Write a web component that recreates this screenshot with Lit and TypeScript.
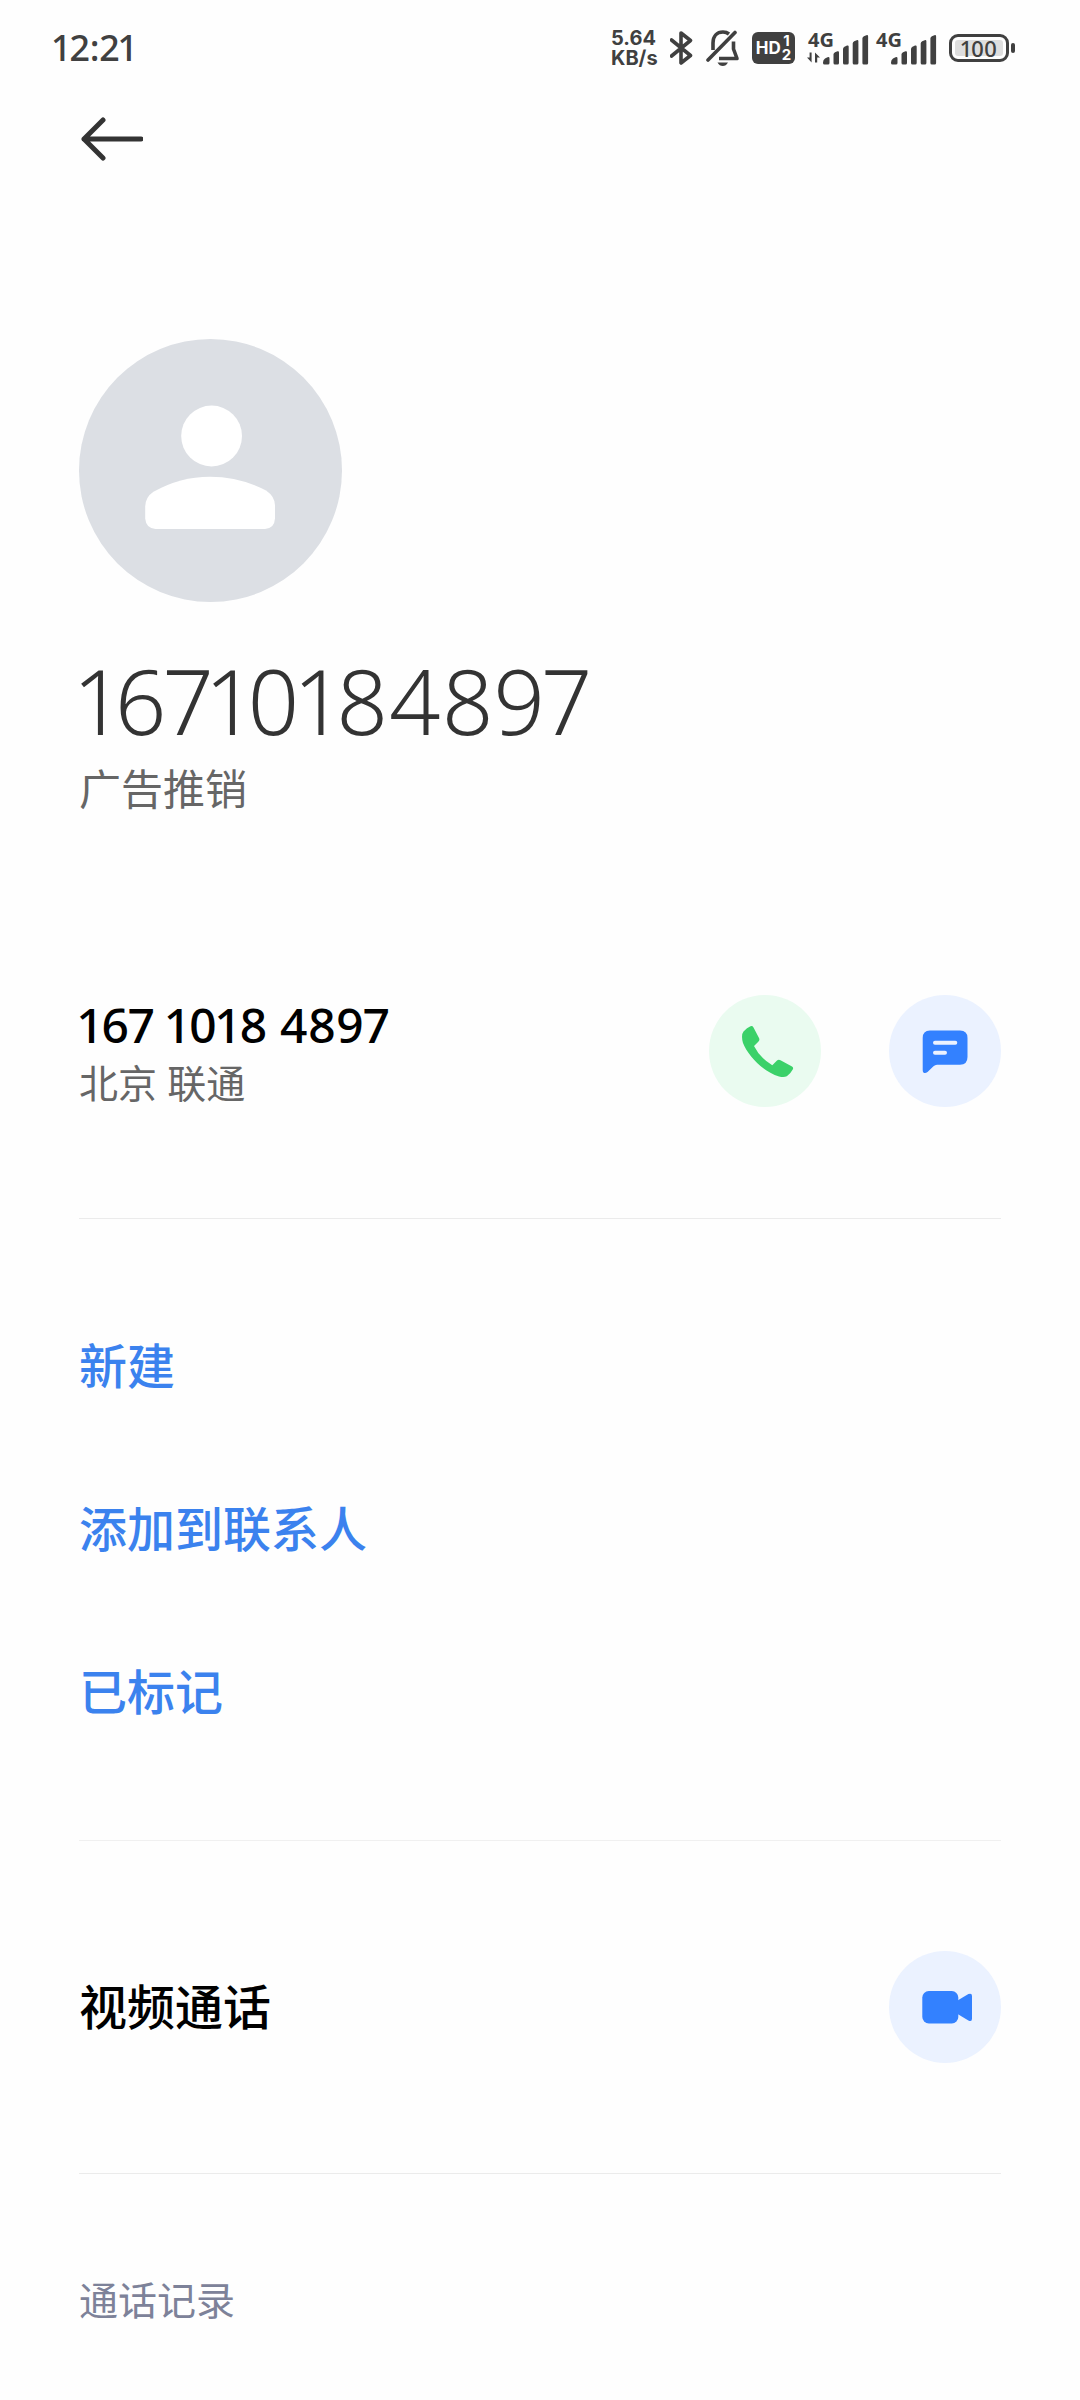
import { LitElement, html, css, svg } from 'lit';
import { customElement, property, state } from 'lit/decorators.js';

const backIcon = html`<svg width="64" height="48" viewBox="0 0 64 48" aria-hidden="true">
  <path d="M62 24H5M24 5L5 24L24 43" fill="none" stroke="#333" stroke-width="5" stroke-linecap="round" stroke-linejoin="round"/>
</svg>`;

const phoneIcon = svg`<path fill="#3bd169" d="M34.5 36.5Q38 32.5 41.5 31.2Q43.5 30.6 44.5 32.5L50 43Q51 45 49.5 46.5L45 51Q50.5 62.5 63.3 70.3L68 65.6Q69.6 64.3 71.5 65.3L83 71.5Q84.8 72.7 83.7 74.6Q81.5 79 77.8 81.2Q75 82.6 70 81.4C55 77.5 39 61 34 48Q31.8 40 34.5 36.5Z"/>`;

const messageIcon = svg`<path fill="#3381ff" d="M41 35.5H71Q78.5 35.5 78.5 43V62Q78.5 69.7 71 69.7H48Q46 69.7 44.5 71.2L38.5 77Q36 79 34.4 77.4Q33.7 76.7 33.7 75V43Q33.7 35.5 41 35.5Z"/>
  <path stroke="#ebf2ff" stroke-width="4" stroke-linecap="round" d="M46 47.7H66.3M46 57.8H56"/>`;

const videoIcon = svg`<rect x="33.3" y="40" width="36" height="32.4" rx="6.5" fill="#3381ff"/>
  <path fill="#3381ff" d="M69 49.2L79.4 43.1Q83 41.6 83 45V67.8Q83 71.2 79.4 69.5L69 63.2Z"/>`;

@customElement('round-action')
export class RoundAction extends LitElement {
  static styles = css`
    :host { display: block; flex: none; }
    .button {
      display: block;
      width: 112px;
      height: 112px;
      padding: 0;
      border: 0;
      border-radius: 50%;
      background: #ebf2ff;
      cursor: pointer;
    }
    .green { background: #eafbf0; }
    .icon { display: block; }
  `;

  @property() label = '';
  @property() tone = 'blue';
  @property({ attribute: false }) icon: unknown;

  render() {
    return html`<button class="button ${this.tone}" type="button" aria-label=${this.label}>
      <svg class="icon" width="112" height="112" viewBox="0 0 112 112" aria-hidden="true">${this.icon}</svg>
    </button>`;
  }
}

@customElement('signal-meter')
export class SignalMeter extends LitElement {
  static styles = css`
    :host { display: grid; width: 62px; height: 34px; }
    .network {
      grid-area: 1 / 1;
      padding-left: 1px;
      font: 700 20px/18px "Noto Sans", sans-serif;
      color: #404040;
    }
    .bars { grid-area: 1 / 1; }
  `;

  @property({ type: Boolean }) traffic = false;

  render() {
    return html`
      <span class="network">4G</span>
      <svg class="bars" width="62" height="34" viewBox="0 0 62 34" fill="#404040" aria-hidden="true">
        ${this.traffic
          ? svg`<path d="M4.6 21.5V31.5L0 26.5H2.6V21.5ZM8 31.500V21.500L13 26.500H10.200V31.500Z"/>`
          : ''}
        <path d="M16 31.5Q16 29 18 27.5L20.5 26.2Q22.5 25.5 22.5 27.5V32Q22.5 33.5 21 33.5H17.5Q16 33.5 16 32Z"/>
        <path d="M26.5 23.5Q26.5 22 28 21.3L30.5 20.3Q32 19.8 32 21.5V32Q32 33.5 30.5 33.5H28Q26.5 33.5 26.5 32Z"/>
        <path d="M36 18Q36 16.5 37.5 15.7L40 14.5Q41.7 14 41.7 15.7V32Q41.7 33.5 40.2 33.5H37.5Q36 33.5 36 32Z"/>
        <path d="M45.7 12.5Q45.7 11 47.2 10.3L49.7 9.2Q51.4 8.7 51.4 10.4V32Q51.4 33.5 49.9 33.5H47.2Q45.7 33.5 45.7 32Z"/>
        <path d="M55.4 7.5Q55.4 6 56.9 5.3L59.4 4.2Q61.1 3.7 61.1 5.4V32Q61.1 33.5 59.6 33.5H56.9Q55.4 33.5 55.4 32Z"/>
      </svg>
    `;
  }
}

@customElement('status-bar')
export class StatusBar extends LitElement {
  static styles = css`
    :host {
      display: flex;
      align-items: center;
      justify-content: space-between;
      height: 96px;
      padding: 0 65px 0 53px;
      color: #404040;
      font-family: "Noto Sans", "Noto Sans CJK SC", sans-serif;
    }
    .time {
      font-size: 36px;
      line-height: 48px;
      font-weight: 500;
      font-variant-numeric: proportional-nums;
    }
    .icons { display: flex; align-items: center; gap: 12px; }
    .speed {
      width: 47px;
      font-family: Inter, sans-serif;
      font-size: 20px;
      line-height: 20px;
      font-weight: 700;
      white-space: nowrap;
    }
    .line { display: block; }
    .hd {
      display: flex;
      align-items: center;
      justify-content: center;
      gap: 1px;
      width: 43px;
      height: 32px;
      border-radius: 6px;
      background: #404040;
      color: #fff;
      font-family: Inter, sans-serif;
      font-weight: 700;
      font-size: 17px;
      line-height: 32px;
    }
    .sims { display: grid; justify-items: center; font-size: 15px; line-height: 14px; }
    .signals { display: flex; gap: 6px; }
    .battery { display: flex; align-items: center; gap: 2px; }
    .cell {
      box-sizing: border-box;
      width: 60px;
      height: 28px;
      padding: 3px;
      border: 3px solid #404040;
      border-radius: 9px;
    }
    .level {
      display: block;
      border-radius: 3px;
      background: #dedede;
      text-align: center;
      font-size: 22px;
      line-height: 16px;
      font-weight: 500;
    }
    .tip { width: 4px; height: 10px; border-radius: 2px; background: #404040; }
  `;

  render() {
    return html`
      <span class="time">12:21</span>
      <div class="icons">
        <div class="speed"><span class="line">5.64</span><span class="line">KB/s</span></div>
        <svg width="24" height="36" viewBox="0 0 24 36" aria-hidden="true">
          <path d="M1.500 10L20.500 25.500L11 33V3L20.500 10.500L1.500 26" fill="none" stroke="#404040" stroke-width="3.6" stroke-linecap="round" stroke-linejoin="round"/>
        </svg>
        <svg width="34" height="38" viewBox="0 0 34 38" aria-hidden="true">
          <path d="M7 21V14C7 7 11 3 17 3Q20.5 3 23 5M27.5 12.5V20L31 29.5H13" fill="none" stroke="#404040" stroke-width="3.6" stroke-linejoin="round"/>
          <path d="M2 31L29 3.5" stroke="#404040" stroke-width="3.6" stroke-linecap="round"/>
          <path d="M11.5 33.5H22Q20 37 16.8 37Q13.5 37 11.5 33.5Z" fill="#404040"/>
        </svg>
        <div class="hd"><span>HD</span><span class="sims"><span>1</span><span>2</span></span></div>
        <div class="signals">
          <signal-meter traffic></signal-meter>
          <signal-meter></signal-meter>
        </div>
        <div class="battery">
          <div class="cell"><span class="level">100</span></div>
          <div class="tip"></div>
        </div>
      </div>
    `;
  }
}

@customElement('app-root')
export class AppRoot extends LitElement {
  static styles = css`
    :host {
      display: block;
      min-height: 100vh;
      background: #fefefe;
      color: #000;
      font-family: "Noto Sans", "Noto Sans CJK SC", sans-serif;
      font-variant-numeric: proportional-nums;
    }
    .toolbar { display: flex; align-items: center; height: 86px; padding: 0 79px; }
    .back { display: block; padding: 0; border: 0; background: none; cursor: pointer; }
    .back svg { display: block; }
    .content { padding: 157px 79px 0; }
    .avatar { display: block; }
    .name {
      margin: 42px 0 0;
      font-size: 90px;
      line-height: 112px;
      font-weight: 300;
      color: #333;
    }
    .tag { margin: 5px 0 0; font-size: 42px; line-height: 56px; color: #666; }
    .row {
      display: flex;
      align-items: center;
      justify-content: space-between;
      padding: 110px 0;
      border-bottom: 1px solid #ebebeb;
    }
    .first { padding: 174px 0 107px; }
    .contact { padding-top: 4px; }
    .number { margin: 0; font-size: 48px; line-height: 60px; font-weight: 500; }
    .place { margin: 0; font-size: 39px; line-height: 56px; color: #666; }
    .buttons { display: flex; gap: 68px; }
    .actions {
      margin: 0;
      padding: 65px 0 67px;
      list-style: none;
      border-bottom: 1px solid #f0f0f0;
    }
    .action {
      display: block;
      width: 100%;
      height: 163px;
      padding: 0;
      border: 0;
      background: none;
      text-align: left;
      font: inherit;
      font-size: 48px;
      line-height: 64px;
      font-weight: 500;
      color: #3b82ee;
      cursor: pointer;
    }
    .title { margin: 0; font-size: 48px; line-height: 64px; font-weight: 500; }
    .history { margin: 98px 0 0; font-size: 39px; line-height: 56px; font-weight: 400; color: #7d8299; }
  `;

  @state() private actions = ['新建', '添加到联系人', '已标记'];

  render() {
    return html`
      <status-bar></status-bar>
      <header class="toolbar">
        <button class="back" type="button" aria-label="返回">${backIcon}</button>
      </header>
      <main class="content">
        <svg class="avatar" width="263" height="263" viewBox="0 0 263 263" aria-hidden="true">
          <circle cx="131.5" cy="131.5" r="131.5" fill="#dcdfe4"/>
          <circle cx="132.6" cy="97" r="30.4" fill="#fff"/>
          <path fill="#fff" d="M66.2 167.5Q66.5 158 74.5 152.8Q101 137.7 131 137.7Q161 137.7 187 151.5Q196 157.5 196 166.5V179.5Q195.5 189.2 186 190H76.5Q67 189.2 66.2 179.5Z"/>
        </svg>
        <h1 class="name">16710184897</h1>
        <p class="tag">广告推销</p>
        <section class="row first">
          <div class="contact">
            <p class="number">167 1018 4897</p>
            <p class="place">北京 联通</p>
          </div>
          <div class="buttons">
            <round-action label="拨打电话" tone="green" .icon=${phoneIcon}></round-action>
            <round-action label="发送短信" .icon=${messageIcon}></round-action>
          </div>
        </section>
        <ul class="actions">
          ${this.actions.map((name) => html`<li><button class="action" type="button">${name}</button></li>`)}
        </ul>
        <section class="row">
          <h2 class="title">视频通话</h2>
          <round-action label="视频通话" .icon=${videoIcon}></round-action>
        </section>
        <h2 class="history">通话记录</h2>
      </main>
    `;
  }
}
